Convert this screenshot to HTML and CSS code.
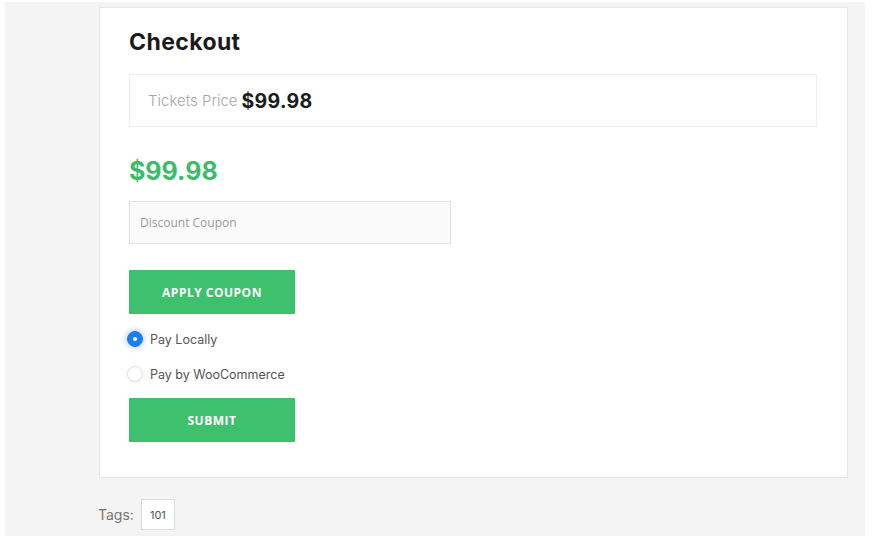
FILE: index.html
```html
<!DOCTYPE html>
<html>
<head>
<meta charset="utf-8">
<link rel="stylesheet" href="styles.css">
</head>
<body>
<div class="page">
  <div class="card">
    <h2 class="title">Checkout</h2>
    <div class="price-box">
      <span class="price-label">Tickets Price</span>
      <span class="price-value">$99.98</span>
    </div>
    <div class="total">$99.98</div>
    <input class="coupon" type="text" placeholder="Discount Coupon">
    <button class="btn btn-apply">APPLY COUPON</button>
    <label class="radio-row">
      <span class="radio checked"></span>
      <span class="radio-label">Pay Locally</span>
    </label>
    <label class="radio-row">
      <span class="radio"></span>
      <span class="radio-label">Pay by WooCommerce</span>
    </label>
    <button class="btn btn-submit">SUBMIT</button>
  </div>
  <div class="tags">
    <span class="tags-label">Tags:</span>
    <span class="tag">101</span>
  </div>
</div>
</body>
</html>
```

FILE: styles.css
```css
html, body {
  margin: 0;
  padding: 0;
  background: #ffffff;
}
body {
  font-family: "Inter", "Open Sans", sans-serif;
  height: 536px;
  overflow: hidden;
}
.page {
  margin-left: 5px;
  margin-top: 2px;
  width: 860px;
  height: 534px;
  background: #f4f4f4;
  box-sizing: border-box;
  padding: 5px 17px 0 94px;
}
.card {
  background: #ffffff;
  border: 1px solid #e6e6e6;
  box-sizing: border-box;
  height: 471px;
  padding: 20px 30px 0 29px;
  display: flex;
  flex-direction: column;
  align-items: flex-start;
}
.title {
  margin: 0;
  font-family: "Inter", sans-serif;
  font-weight: 700;
  font-size: 23px;
  line-height: 28px;
  color: #1b1b1b;
  letter-spacing: 0.4px;
}
.price-box {
  margin-top: 18px;
  align-self: stretch;
  height: 53px;
  box-sizing: border-box;
  border: 1px solid #ececec;
  display: flex;
  align-items: center;
  padding-left: 18px;
  gap: 4px;
}
.price-label {
  font-size: 15px;
  font-weight: 300;
  color: #a6a6a6;
}
.price-value {
  font-size: 19.5px;
  font-weight: 700;
  color: #1b1b1b;
  letter-spacing: 0.3px;
}
.total {
  margin-top: 28px;
  font-size: 25px;
  font-weight: 700;
  color: #3dbb6b;
  line-height: 32px;
}
.coupon {
  margin-top: 14px;
  width: 322px;
  height: 43px;
  box-sizing: border-box;
  border: 1px solid #e2e2e2;
  background: #fafafa;
  padding: 0 10px;
  font-family: "Open Sans", sans-serif;
  font-size: 12px;
  outline: none;
}
.coupon::placeholder {
  color: #9a9a9a;
}
.btn {
  width: 166px;
  height: 44px;
  border: none;
  background: #3dc16d;
  color: #ffffff;
  font-family: "Open Sans", sans-serif;
  font-weight: 700;
  font-size: 12px;
  letter-spacing: 0.5px;
  cursor: pointer;
}
.btn-apply {
  margin-top: 26px;
}
.radio-row {
  display: flex;
  align-items: center;
  gap: 7px;
  margin-left: -2px;
  height: 20px;
}
.btn-apply + .radio-row {
  margin-top: 15px;
}
.radio-row + .radio-row {
  margin-top: 15px;
}
.radio {
  width: 16px;
  height: 16px;
  border-radius: 50%;
  border: 1px solid #e0e0e0;
  background: #ffffff;
  box-sizing: border-box;
  box-shadow: 0 1px 3px rgba(0,0,0,0.06);
  display: flex;
  align-items: center;
  justify-content: center;
}
.radio.checked {
  background: #1a7ff2;
  border-color: #1a7ff2;
  box-shadow: 0 0 5px 2px rgba(26,127,242,0.25);
}
.radio.checked::after {
  content: "";
  width: 4px;
  height: 4px;
  border-radius: 50%;
  background: #ffffff;
}
.radio-label {
  font-size: 12.5px;
  color: #555555;
}
.btn-submit {
  margin-top: 14px;
}
.tags {
  display: flex;
  align-items: center;
  gap: 7px;
  margin-top: 21px;
  margin-left: -1px;
}
.tags-label {
  font-size: 14px;
  color: #777777;
}
.tag {
  display: inline-flex;
  align-items: center;
  justify-content: center;
  width: 34px;
  height: 31px;
  box-sizing: border-box;
  background: #ffffff;
  border: 1px solid #dddddd;
  font-size: 11px;
  color: #555555;
}
```
